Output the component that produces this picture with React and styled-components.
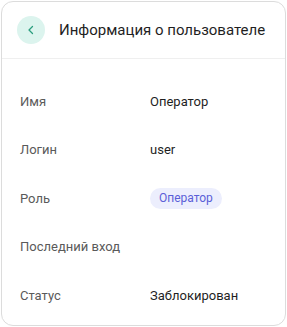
import styled, { createGlobalStyle } from "styled-components";

const GlobalStyle = createGlobalStyle`
  html, body {
    margin: 0;
    padding: 0;
    background: #ffffff;
  }
  body {
    font-family: Roboto, "Noto Sans", sans-serif;
  }
`;

const Page = styled.div`
  padding: 1px;
`;

const Card = styled.section`
  width: 285px;
  height: 325px;
  box-sizing: border-box;
  border: 1px solid #dcdcdc;
  border-radius: 12px;
  background: #fff;
  overflow: hidden;
`;

const Header = styled.header`
  height: 56px;
  display: flex;
  align-items: center;
  gap: 14px;
  padding: 0 15px;
  border-bottom: 1px solid #efefef;
`;

const BackButton = styled.button`
  width: 28px;
  height: 28px;
  border-radius: 50%;
  border: none;
  background: #dcf4ee;
  color: #2a9d7e;
  display: flex;
  align-items: center;
  justify-content: center;
  padding: 0;
  cursor: pointer;
`;

const Title = styled.h2`
  margin: 0;
  font-size: 15px;
  font-weight: 400;
  color: #1f1f1f;
  white-space: nowrap;
`;

const Body = styled.div`
  padding: 18px 18px 0;
`;

const Row = styled.div`
  height: 48.5px;
  display: grid;
  grid-template-columns: 130px 1fr;
  align-items: center;
  font-size: 13px;
`;

const Label = styled.span`
  color: #5a5a5a;
`;

const Value = styled.span`
  color: #1f1f1f;
`;

const Badge = styled.span`
  justify-self: start;
  height: 21px;
  padding: 0 9px;
  border-radius: 11px;
  background: #eceefd;
  color: #5b5fd8;
  font-size: 12px;
  display: inline-flex;
  align-items: center;
`;

const rows = [
  { label: "Имя", value: "Оператор" },
  { label: "Логин", value: "user" },
  { label: "Роль", badge: "Оператор" },
  { label: "Последний вход", value: "" },
  { label: "Статус", value: "Заблокирован" },
];

export default function App() {
  return (
    <Page>
      <GlobalStyle />
      <Card>
        <Header>
          <BackButton aria-label="Назад">
            <svg width="10" height="10" viewBox="0 0 10 10" fill="none">
              <path d="M6.5 1.5 3 5l3.5 3.5" stroke="currentColor" strokeWidth="1.3" strokeLinecap="round" strokeLinejoin="round" />
            </svg>
          </BackButton>
          <Title>Информация о пользователе</Title>
        </Header>
        <Body>
          {rows.map((r) => (
            <Row key={r.label}>
              <Label>{r.label}</Label>
              {r.badge ? <Badge>{r.badge}</Badge> : <Value>{r.value}</Value>}
            </Row>
          ))}
        </Body>
      </Card>
    </Page>
  );
}
